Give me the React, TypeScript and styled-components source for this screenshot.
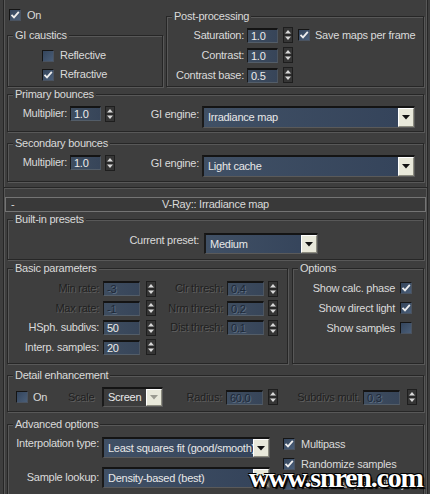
import React from "react";
import styled, { createGlobalStyle } from "styled-components";

const GlobalStyle = createGlobalStyle`
  html, body {
    margin: 0;
    padding: 0;
    background: #3e3e3e;
  }
  body {
    font-family: "Liberation Sans", Arial, sans-serif;
    font-size: 11px;
    color: #dadada;
  }
  * {
    box-sizing: border-box;
  }
`;

const Page = styled.div`
  position: relative;
  width: 430px;
  height: 494px;
  overflow: hidden;
  background: #3e3e3e;
  padding-left: 3px;
  letter-spacing: -0.25px;
  line-height: 13px;
`;

const Frame = styled.div`
  width: 425px;
  height: 100%;
  border-left: 1px solid #262626;
  border-right: 1px solid #262626;
  box-shadow: inset 1px 0 0 #575757, inset -1px 0 0 #575757;
  padding: 0 3px;
`;

const Rollout = styled.div`
  height: 188px;
  border-bottom: 1px solid #262626;
  margin: 0 -3px;
  padding: 0 3px;
  box-shadow: 0 1px 0 #575757;
`;

const RolloutHeader = styled.div`
  margin: 9px -2px 0;
  height: 15px;
  border: 1px solid #747474;
  background: #393939;
  display: grid;
  grid-template-columns: 20px 1fr 20px;
  align-items: center;
`;

const Minus = styled.span`
  padding-left: 5px;
`;

const HeaderTitle = styled.span`
  text-align: center;
`;

const TopSection = styled.div`
  display: flex;
  gap: 3px;
  align-items: flex-start;
`;

const LeftColumn = styled.div`
  width: 156px;
  flex: none;
`;

const Group = styled.fieldset<{ $h: number; $mt?: number; $w?: number }>`
  margin: ${(p) => p.$mt ?? 0}px 0 0;
  padding: 0;
  min-width: 0;
  height: ${(p) => p.$h}px;
  border: 1px solid #262626;
  box-shadow: inset 1px 1px 0 #585858, 1px 1px 0 #585858;
  flex: ${(p) => (p.$w ? "none" : "1")};
  width: ${(p) => (p.$w ? `${p.$w}px` : "auto")};
`;

const Legend = styled.legend`
  margin-left: 5px;
  padding: 0 2px;
  line-height: 13px;
  background: #3e3e3e;
`;

const OnRow = styled.div`
  height: 29px;
  padding: 9px 0 0 2px;
  display: flex;
  align-items: flex-start;
  gap: 6px;
`;

const Row = styled.div<{ $h?: number; $pl?: number; $align?: string }>`
  display: flex;
  align-items: ${(p) => p.$align ?? "center"};
  height: ${(p) => p.$h ?? 20}px;
  padding-left: ${(p) => p.$pl ?? 0}px;
`;

const Rows = styled.div<{ $pt: number; $gap?: number }>`
  display: flex;
  flex-direction: column;
  padding-top: ${(p) => p.$pt}px;
  gap: ${(p) => p.$gap ?? 0}px;
`;

const Label = styled.span<{
  $w?: number;
  $right?: boolean;
  $disabled?: boolean;
  $pr?: number;
  $ml?: number;
  $lh?: number;
}>`
  flex: none;
  width: ${(p) => (p.$w ? `${p.$w}px` : "auto")};
  text-align: ${(p) => (p.$right ? "right" : "left")};
  padding-right: ${(p) => p.$pr ?? 0}px;
  margin-left: ${(p) => p.$ml ?? 0}px;
  line-height: ${(p) => p.$lh ?? 13}px;
  white-space: nowrap;
  color: ${(p) => (p.$disabled ? "#202020" : "#dadada")};
  text-shadow: ${(p) => (p.$disabled ? "1px 1px 0 #5e5e5e" : "none")};
`;

const Field = styled.div<{ $w: number; $ml?: number; $disabled?: boolean }>`
  flex: none;
  width: ${(p) => p.$w}px;
  height: 15px;
  margin-left: ${(p) => p.$ml ?? 0}px;
  padding-left: 3px;
  background: linear-gradient(90deg, #3e4d60, #374559);
  border-top: 2px solid #141414;
  border-left: 1px solid #1a1a1a;
  border-bottom: 1px solid #535d68;
  border-right: 1px solid #4c5560;
  line-height: 12px;
  color: ${(p) => (p.$disabled ? "#1c2838" : "#ececec")};
  text-shadow: ${(p) => (p.$disabled ? "1px 1px 0 #5f6f82" : "none")};
`;

const SpinBox = styled.span<{ $ml: number }>`
  flex: none;
  width: 10px;
  height: 16px;
  margin-left: ${(p) => p.$ml}px;
  border: 1px solid #1e1e1e;
  background: #353535;
  display: flex;
`;

const Spinner = ({ ml = 4 }: { ml?: number }) => (
  <SpinBox $ml={ml}>
    <svg width="8" height="14" viewBox="0 0 8 14">
      <path d="M4 2 L7 5.5 H1 Z" fill="#d8d8d8" />
      <path d="M0 7 H8" stroke="#1e1e1e" strokeWidth="1" />
      <path d="M4 12 L7 8.5 H1 Z" fill="#d8d8d8" />
    </svg>
  </SpinBox>
);

const Box = styled.span<{ $ml?: number }>`
  flex: none;
  width: 12px;
  height: 12px;
  margin-left: ${(p) => p.$ml ?? 0}px;
  background: linear-gradient(135deg, #34455c, #4a5e78);
  border-top: 1px solid #151515;
  border-left: 1px solid #151515;
  border-bottom: 1px solid #4a5360;
  border-right: 1px solid #4a5360;
  display: flex;
  align-items: center;
  justify-content: center;
`;

const Check = ({ on, ml }: { on?: boolean; ml?: number }) => (
  <Box $ml={ml}>
    {on && (
      <svg width="10" height="10" viewBox="0 0 10 10">
        <path
          d="M1.5 4.8 L4 7.4 L8.8 1.8"
          stroke="#eeeeee"
          strokeWidth="1.8"
          fill="none"
        />
      </svg>
    )}
  </Box>
);

const SelectBox = styled.div<{
  $w: number;
  $h: number;
  $ml?: number;
  $disabled?: boolean;
}>`
  flex: none;
  display: flex;
  align-items: stretch;
  width: ${(p) => p.$w}px;
  height: ${(p) => p.$h}px;
  margin-left: ${(p) => p.$ml ?? 0}px;
  background: ${(p) =>
    p.$disabled ? "#3c3c3c" : "linear-gradient(90deg, #405065, #34435a)"};
  border-top: 2px solid #141414;
  border-left: 2px solid #1b1b1b;
  border-bottom: 1px solid #5a5a5a;
  border-right: 1px solid #5a5a5a;
`;

const SelectText = styled.span`
  flex: 1;
  padding-left: 4px;
  align-self: center;
  white-space: nowrap;
  overflow: hidden;
  color: #e8e8e8;
`;

const ArrowBtn = styled.span`
  flex: none;
  width: 16px;
  background: #e8e8da;
  border-top: 1px solid #ffffff;
  border-left: 1px solid #ffffff;
  border-bottom: 1px solid #8c8c80;
  border-right: 1px solid #8c8c80;
  display: flex;
  align-items: center;
  justify-content: center;
`;

const Select = ({
  value,
  w,
  h = 21,
  ml,
  disabled,
}: {
  value: string;
  w: number;
  h?: number;
  ml?: number;
  disabled?: boolean;
}) => (
  <SelectBox $w={w} $h={h} $ml={ml} $disabled={disabled}>
    <SelectText>{value}</SelectText>
    <ArrowBtn>
      <svg width="8" height="5" viewBox="0 0 8 5">
        <path d="M0 0 H8 L4 4.5 Z" fill={disabled ? "#9a9a90" : "#111"} />
      </svg>
    </ArrowBtn>
  </SelectBox>
);

const Split = styled.div`
  display: flex;
  gap: 4px;
  margin-top: 2px;
`;

const OptionsRow = styled.div`
  display: flex;
  align-items: center;
  justify-content: flex-end;
  gap: 5px;
  height: 20px;
  padding-right: 11px;
`;

const AdvancedBody = styled.div`
  display: flex;
  padding-top: 6px;
`;

const AdvancedLeft = styled.div`
  display: flex;
  flex-direction: column;
  gap: 9px;
`;

const AdvancedRight = styled.div`
  display: flex;
  flex-direction: column;
  margin-top: -3px;
  margin-left: 13px;
`;

const Watermark = styled.div`
  position: absolute;
  left: 249px;
  top: 463px;
  font-family: "Liberation Serif", "Times New Roman", serif;
  font-weight: 700;
  font-size: 28px;
  line-height: 30px;
  letter-spacing: -1.2px;
  color: #ffffff;
  text-shadow: 1px 1px 0 #000, -1px -1px 0 #000, 1px -1px 0 #000,
    -1px 1px 0 #000, 2px 2px 1px #000;
`;

const postRows = [
  { label: "Saturation:", value: "1.0" },
  { label: "Contrast:", value: "1.0" },
  { label: "Contrast base:", value: "0.5" },
];

const basicRows = [
  { label: "Min rate:", value: "-3", disabled: true, right: { label: "Clr thresh:", value: "0.4" } },
  { label: "Max rate:", value: "-1", disabled: true, right: { label: "Nrm thresh:", value: "0.2" } },
  { label: "HSph. subdivs:", value: "50", right: { label: "Dist thresh:", value: "0.1" } },
  { label: "Interp. samples:", value: "20" },
];

const options = [
  { label: "Show calc. phase", on: true },
  { label: "Show direct light", on: true },
  { label: "Show samples", on: false },
];

const bounces = [
  { title: "Primary bounces", engine: "Irradiance map", mt: 1, h: 44 },
  { title: "Secondary bounces", engine: "Light cache", mt: 5, h: 45 },
];

const advancedChecks = [
  { label: "Multipass", on: true },
  { label: "Randomize samples", on: true },
  { label: "Check sample visibility", on: false },
];

export default function App() {
  return (
    <Page>
      <GlobalStyle />
      <Frame>
        <Rollout>
          <TopSection>
            <LeftColumn>
              <OnRow>
                <Check on />
                <Label>On</Label>
              </OnRow>
              <Group $h={58}>
                <Legend>GI caustics</Legend>
                <Rows $pt={4}>
                  <Row $h={19} $pl={34}>
                    <Check />
                    <Label $ml={6}>Reflective</Label>
                  </Row>
                  <Row $h={19} $pl={34}>
                    <Check on />
                    <Label $ml={6}>Refractive</Label>
                  </Row>
                </Rows>
              </Group>
            </LeftColumn>
            <Group $h={77} $mt={10}>
              <Legend>Post-processing</Legend>
              <Rows $pt={2}>
                {postRows.map((r, i) => (
                  <Row key={r.label}>
                    <Label $w={77} $right>
                      {r.label}
                    </Label>
                    <Field $w={31} $ml={3}>
                      {r.value}
                    </Field>
                    <Spinner ml={5} />
                    {i === 0 && (
                      <>
                        <Check on ml={5} />
                        <Label $ml={5}>Save maps per frame</Label>
                      </>
                    )}
                  </Row>
                ))}
              </Rows>
            </Group>
          </TopSection>
          {bounces.map((b) => (
            <Group key={b.title} $h={b.h} $mt={b.mt}>
              <Legend>{b.title}</Legend>
              <Rows $pt={5}>
                <Row $h={22} $align="flex-start">
                  <Label $w={59} $right $lh={15}>
                    Multiplier:
                  </Label>
                  <Field $w={31} $ml={3}>
                    1.0
                  </Field>
                  <Spinner ml={4} />
                  <Label $w={84} $right $lh={17}>
                    GI engine:
                  </Label>
                  <Select value={b.engine} w={213} h={22} ml={3} />
                </Row>
              </Rows>
            </Group>
          ))}
        </Rollout>

        <RolloutHeader>
          <Minus>-</Minus>
          <HeaderTitle>V-Ray:: Irradiance map</HeaderTitle>
        </RolloutHeader>

        <Group $h={47} $mt={1}>
          <Legend>Built-in presets</Legend>
          <Rows $pt={7}>
            <Row $h={21} $align="flex-start">
              <Label $w={191} $right $lh={14}>
                Current preset:
              </Label>
              <Select value="Medium" w={114} h={21} ml={5} />
            </Row>
          </Rows>
        </Group>

        <Split>
          <Group $h={102}>
            <Legend>Basic parameters</Legend>
            <Rows $pt={6} $gap={4.5}>
              {basicRows.map((r) => (
                <Row key={r.label} $h={15}>
                  <Label $w={91} $right $disabled={r.disabled}>
                    {r.label}
                  </Label>
                  <Field $w={37} $ml={4} $disabled={r.disabled}>
                    {r.value}
                  </Field>
                  <Spinner ml={6} />
                  {r.right && (
                    <>
                      <Label $w={67} $right $disabled>
                        {r.right.label}
                      </Label>
                      <Field $w={37} $ml={4} $disabled>
                        {r.right.value}
                      </Field>
                      <Spinner ml={4} />
                    </>
                  )}
                </Row>
              ))}
            </Rows>
          </Group>
          <Group $h={102} $w={132}>
            <Legend>Options</Legend>
            <Rows $pt={3}>
              {options.map((o) => (
                <OptionsRow key={o.label}>
                  <Label>{o.label}</Label>
                  <Check on={o.on} />
                </OptionsRow>
              ))}
            </Rows>
          </Group>
        </Split>

        <Group $h={43} $mt={5}>
          <Legend>Detail enhancement</Legend>
          <Rows $pt={5}>
            <Row $h={20} $pl={8}>
              <Check />
              <Label $w={35} $ml={5}>
                On
              </Label>
              <Label $w={34} $disabled>
                Scale
              </Label>
              <Select value="Screen" w={61} h={20} disabled />
              <Label $w={63} $right $pr={4} $disabled>
                Radius:
              </Label>
              <Field $w={37} $disabled>
                60.0
              </Field>
              <Spinner ml={5} />
              <Label $w={85} $right $pr={3} $disabled>
                Subdivs mult.
              </Label>
              <Field $w={37} $disabled>
                0.3
              </Field>
              <Spinner ml={7} />
            </Row>
          </Rows>
        </Group>

        <Group $h={90} $mt={6}>
          <Legend>Advanced options</Legend>
          <AdvancedBody>
            <AdvancedLeft>
              <Row $h={21} $align="flex-start">
                <Label $w={94} $right $pr={3}>
                  Interpolation type:
                </Label>
                <Select value="Least squares fit (good/smooth)" w={168} />
              </Row>
              <Row $h={21}>
                <Label $w={94} $right $pr={3}>
                  Sample lookup:
                </Label>
                <Select value="Density-based (best)" w={168} />
              </Row>
            </AdvancedLeft>
            <AdvancedRight>
              {advancedChecks.map((c) => (
                <Row key={c.label} $h={20}>
                  <Check on={c.on} />
                  <Label $ml={6}>{c.label}</Label>
                </Row>
              ))}
            </AdvancedRight>
          </AdvancedBody>
        </Group>
      </Frame>
      <Watermark>www.snren.com</Watermark>
    </Page>
  );
}
